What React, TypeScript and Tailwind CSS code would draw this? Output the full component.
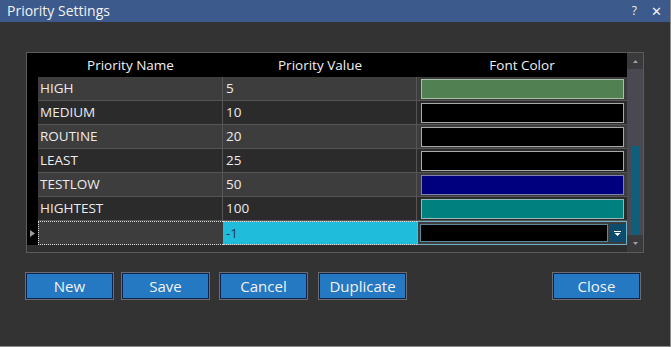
import React from "react";

type Row = { name: string; value: string; color: string; border: string };

const rows: Row[] = [
  { name: "HIGH", value: "5", color: "#518152", border: "#a9c0a9" },
  { name: "MEDIUM", value: "10", color: "#000000", border: "#a8a8a8" },
  { name: "ROUTINE", value: "20", color: "#000000", border: "#a8a8a8" },
  { name: "LEAST", value: "25", color: "#000000", border: "#a8a8a8" },
  { name: "TESTLOW", value: "50", color: "#00007f", border: "#8080b0" },
  { name: "HIGHTEST", value: "100", color: "#00807f", border: "#90b8b8" },
];

const font = { fontFamily: '"Open Sans", "Noto Sans", sans-serif' };

function Btn({ label, className }: { label: string; className?: string }) {
  return (
    <div
      className={
        "h-[28px] w-[89px] flex items-center justify-center bg-[#2479c2] border border-[#6b6b72] shadow-[inset_0_0_0_1px_#10244f] text-[15px] text-[#f2f2f2] " +
        (className ?? "")
      }
    >
      {label}
    </div>
  );
}

export default function App() {
  return (
    <div
      className="w-[671px] h-[347px] bg-[#333333] flex flex-col border-r border-b border-[#8c8c8c] overflow-hidden"
      style={font}
    >
      <div className="h-[22px] bg-[#3c5a8b] flex items-center px-[7px] text-[#f2f2f2]">
        <span className="text-[14px] leading-none">Priority Settings</span>
        <span className="ml-auto text-[12px] leading-none mr-[14px]">?</span>
        <span className="text-[13px] leading-none mr-[1px]">✕</span>
      </div>

      <div className="pt-[30px] pl-[26px]">
        <div className="w-[618px] h-[201px] border border-[#5c5c5c] flex bg-[#2e2e2e]">
          <div className="w-[600px] flex flex-col">
            {/* header */}
            <div className="h-[24px] bg-black flex text-[13.5px] text-[#f0f0f0]">
              <div className="w-[11px]" />
              <div className="w-[185px] flex items-center justify-center">Priority Name</div>
              <div className="w-[194px] flex items-center justify-center">Priority Value</div>
              <div className="w-[210px] flex items-center justify-center">Font Color</div>
            </div>
            {rows.map((r, i) => (
              <div
                key={r.name}
                className={
                  "h-[24px] flex text-[13.5px] text-[#ececec] " +
                  (i % 2 === 0 ? "bg-[#3d3d3d]" : "bg-[#2b2b2b]")
                }
              >
                <div className="w-[11px] bg-black" />
                <div className="w-[185px] border-r border-b border-[#555555] flex items-center pl-[2px]">
                  {r.name}
                </div>
                <div className="w-[194px] border-r border-b border-[#555555] flex items-center pl-[3px]">
                  {r.value}
                </div>
                <div className="w-[210px] border-b border-[#555555] pl-[4px] pr-[3px] pt-[2px] pb-[1px]">
                  <div
                    className="w-full h-full border"
                    style={{ backgroundColor: r.color, borderColor: r.border }}
                  />
                </div>
              </div>
            ))}
            {/* new row */}
            <div className="h-[24px] flex text-[13.5px] bg-[#3d3d3d]">
              <div className="w-[11px] bg-black flex items-center justify-center">
                <svg width="5" height="7" viewBox="0 0 5 7">
                  <path d="M0 0 L5 3.5 L0 7 Z" fill="#9a9a9a" />
                </svg>
              </div>
              <div className="w-[185px] border border-r-0 border-dotted border-[#d8d8d8]" />
              <div className="w-[194px] bg-[#1fbcdc] border-y border-dotted border-[#d8d8d8] flex items-center pl-[3px] text-[#20364e]">
                -1
              </div>
              <div className="w-[210px] border border-[#6fb2c8] flex p-[2px] pr-[1px]">
                <div className="flex-1 bg-black border border-[#5a8a9a]" />
                <div className="w-[15px] ml-[2px] bg-[#0d4a6b] flex items-center justify-center">
                  <svg width="7" height="5" viewBox="0 0 7 5">
                    <rect x="0" y="0" width="7" height="1" fill="#ffffff" />
                    <path d="M0.5 2 L6.5 2 L3.5 5 Z" fill="#ffffff" />
                  </svg>
                </div>
              </div>
            </div>
            <div className="flex-1 bg-[#2e2e2e]" />
          </div>
          {/* scrollbar */}
          <div className="w-[16px] flex flex-col bg-[#4a4850]">
            <div className="h-[16px] bg-[#3a3a3d] flex items-center justify-center">
              <svg width="5" height="3" viewBox="0 0 5 3">
                <path d="M0 3 L2.5 0 L5 3 Z" fill="#a0a0a0" />
              </svg>
            </div>
            <div className="flex-1 flex flex-col pt-[77px] items-center">
              <div className="w-[7px] flex-1 bg-[#0f5f7c]" />
            </div>
            <div className="h-[17px] bg-[#3a3a3d] flex items-center justify-center">
              <svg width="5" height="3" viewBox="0 0 5 3">
                <path d="M0 0 L2.5 3 L5 0 Z" fill="#a0a0a0" />
              </svg>
            </div>
          </div>
        </div>
      </div>

      <div className="flex pt-[19px]">
        <Btn label="New" className="ml-[25px]" />
        <Btn label="Save" className="ml-[7px]" />
        <Btn label="Cancel" className="ml-[9px]" />
        <Btn label="Duplicate" className="ml-[10px]" />
        <Btn label="Close" className="ml-auto mr-[29px]" />
      </div>
    </div>
  );
}
